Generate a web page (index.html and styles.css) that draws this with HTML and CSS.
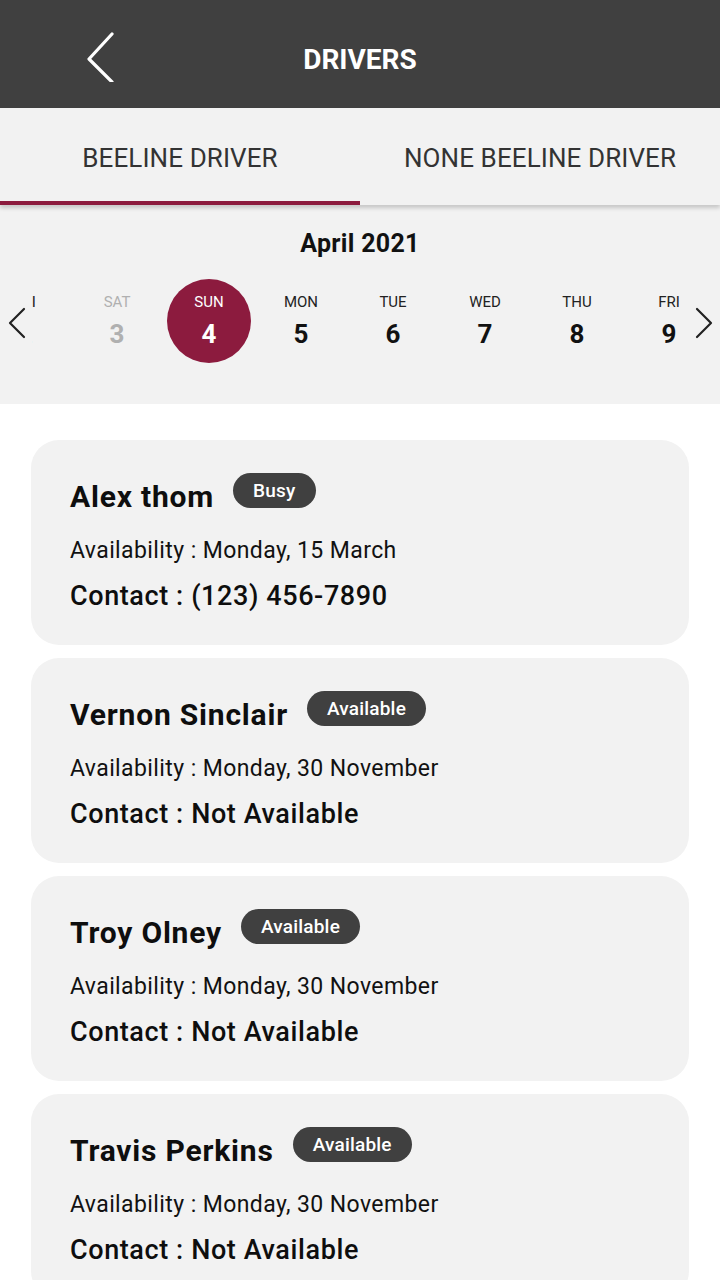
FILE: index.html
```html
<!DOCTYPE html>
<html>
<head>
<meta charset="utf-8">
<link rel="stylesheet" href="styles.css">
</head>
<body>
<div class="app">
  <header class="topbar">
    <span class="back">
      <svg width="30" height="50" viewBox="0 0 30 50"><path d="M27 2 L4 27 L27 50" fill="none" stroke="#fff" stroke-width="3.2" stroke-linecap="round" stroke-linejoin="round"/></svg>
    </span>
    <h1 class="title">DRIVERS</h1>
  </header>

  <nav class="tabs">
    <div class="tab active">BEELINE DRIVER</div>
    <div class="tab">NONE BEELINE DRIVER</div>
  </nav>

  <section class="calendar">
    <div class="month">April 2021</div>
    <div class="week">
      <span class="arrow">
        <svg width="20" height="32" viewBox="0 0 20 32"><path d="M17 2 L3 16 L17 30" fill="none" stroke="#222" stroke-width="2.2" stroke-linecap="round" stroke-linejoin="round"/></svg>
      </span>
      <div class="viewport">
        <div class="track">
          <div class="day"><span class="dname">FRI</span><span class="dnum">2</span></div>
          <div class="day past"><span class="dname">SAT</span><span class="dnum">3</span></div>
          <div class="day selected"><span class="dname">SUN</span><span class="dnum">4</span></div>
          <div class="day"><span class="dname">MON</span><span class="dnum">5</span></div>
          <div class="day"><span class="dname">TUE</span><span class="dnum">6</span></div>
          <div class="day"><span class="dname">WED</span><span class="dnum">7</span></div>
          <div class="day"><span class="dname">THU</span><span class="dnum">8</span></div>
          <div class="day"><span class="dname">FRI</span><span class="dnum">9</span></div>
        </div>
      </div>
      <span class="arrow right">
        <svg width="20" height="32" viewBox="0 0 20 32"><path d="M3 2 L17 16 L3 30" fill="none" stroke="#222" stroke-width="2.2" stroke-linecap="round" stroke-linejoin="round"/></svg>
      </span>
    </div>
  </section>

  <main class="list">
    <article class="card">
      <div class="head"><span class="name">Alex thom</span><span class="badge">Busy</span></div>
      <div class="avail">Availability : Monday, 15 March</div>
      <div class="contact">Contact : (123) 456-7890</div>
    </article>
    <article class="card">
      <div class="head"><span class="name">Vernon Sinclair</span><span class="badge">Available</span></div>
      <div class="avail">Availability : Monday, 30 November</div>
      <div class="contact">Contact : Not Available</div>
    </article>
    <article class="card">
      <div class="head"><span class="name">Troy Olney</span><span class="badge">Available</span></div>
      <div class="avail">Availability : Monday, 30 November</div>
      <div class="contact">Contact : Not Available</div>
    </article>
    <article class="card">
      <div class="head"><span class="name">Travis Perkins</span><span class="badge">Available</span></div>
      <div class="avail">Availability : Monday, 30 November</div>
      <div class="contact">Contact : Not Available</div>
    </article>
  </main>
</div>
</body>
</html>
```

FILE: styles.css
```css
* { box-sizing: border-box; }
html, body { margin: 0; padding: 0; }
body {
  width: 720px;
  height: 1280px;
  overflow: hidden;
  background: #fff;
  font-family: Roboto, "Liberation Sans", sans-serif;
  color: #111;
}
.app { display: flex; flex-direction: column; }

.topbar {
  height: 108px;
  background: #404040;
  display: flex;
  align-items: center;
  position: relative;
}
.back {
  display: flex;
  margin-left: 85px;
  margin-top: 6px;
}
.title {
  position: absolute;
  left: 0; right: 0;
  top: 10px; bottom: 0;
  margin: 0;
  display: flex;
  align-items: center;
  justify-content: center;
  color: #fff;
  font-size: 28px;
  font-weight: 700;
  pointer-events: none;
}

.tabs {
  height: 97px;
  background: #f2f2f2;
  display: flex;
  box-shadow: 0 3px 4px rgba(0,0,0,0.18);
  position: relative;
  z-index: 1;
}
.tab {
  flex: 1;
  display: flex;
  align-items: center;
  justify-content: center;
  font-size: 26px;
  color: #333;
  padding-top: 6px;
  border-bottom: 4px solid transparent;
  letter-spacing: 0.1px;
}
.tab.active { border-bottom-color: #8c1b3e; }

.calendar {
  background: #f2f2f2;
  height: 199px;
  display: flex;
  flex-direction: column;
}
.month {
  text-align: center;
  font-size: 25px;
  font-weight: 700;
  margin-top: 24px;
  color: #111;
  letter-spacing: 0.3px;
}
.week {
  display: flex;
  align-items: center;
  margin-top: 21px;
}
.arrow {
  width: 32px;
  display: flex;
  justify-content: flex-start;
  padding-left: 7px;
  margin-top: 4px;
}
.arrow.right {
  width: 28px;
  padding-left: 2px;
}
.viewport {
  width: 660px;
  overflow: hidden;
}
.track {
  display: flex;
  margin-left: -53px;
}
.day {
  flex: 0 0 92px;
  height: 84px;
  display: flex;
  flex-direction: column;
  align-items: center;
  justify-content: center;
  border-radius: 50%;
  color: #111;
}
.dname {
  font-size: 15px;
  line-height: 18px;
  color: #222;
}
.dnum {
  font-size: 26px;
  font-weight: 700;
  line-height: 32px;
  margin-top: 7px;
}
.day.past .dname, .day.past .dnum { color: #b0b0b0; }
.day.selected {
  flex: 0 0 84px;
  margin: 0 4px;
  background: #8c1b3e;
}
.day.selected .dname, .day.selected .dnum { color: #fff; }

.list {
  padding: 36px 31px 0 31px;
  display: flex;
  flex-direction: column;
  gap: 13px;
}
.card {
  background: #f2f2f2;
  border-radius: 28px;
  height: 205px;
  padding: 31px 39px 0 39px;
  flex-shrink: 0;
}
.head {
  display: flex;
  align-items: flex-start;
  gap: 19px;
}
.name {
  font-size: 30px;
  font-weight: 700;
  line-height: 36px;
  margin-top: 8px;
  color: #0e0e0e;
  letter-spacing: 0.8px;
}
.badge {
  background: #404040;
  color: #fff;
  font-size: 19px;
  font-weight: 500;
  height: 35px;
  line-height: 35px;
  padding: 0 20px;
  border-radius: 18px;
  margin-top: 2px;
  letter-spacing: 0.2px;
}
.avail {
  font-size: 23px;
  margin-top: 22px;
  line-height: 28px;
  color: #111;
  letter-spacing: 0.4px;
}
.contact {
  font-size: 27px;
  font-weight: 500;
  margin-top: 15px;
  line-height: 32px;
  color: #0e0e0e;
  letter-spacing: 0.6px;
}
```
